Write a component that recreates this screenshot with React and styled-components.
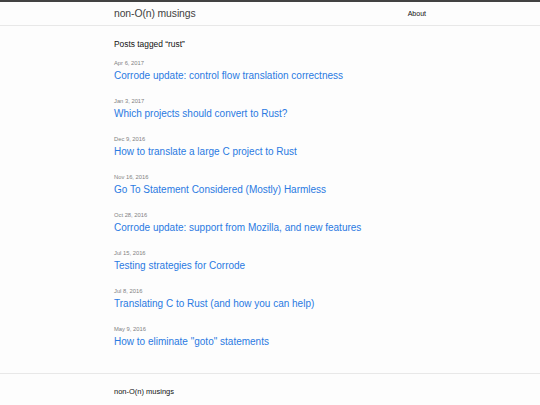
import React from 'react';
import styled, { createGlobalStyle } from 'styled-components';

const GlobalStyle = createGlobalStyle`
  html, body {
    margin: 0;
    padding: 0;
    background: #fdfdfd;
  }
  body {
    font-family: "Liberation Sans", Arial, sans-serif;
    color: #111;
  }
`;

const Header = styled.header`
  border-top: 2px solid #424242;
  border-bottom: 1px solid #e8e8e8;
`;

const Wrapper = styled.div`
  max-width: 312px;
  margin: 0 auto;
`;

const HeaderInner = styled(Wrapper)`
  display: flex;
  align-items: center;
  justify-content: space-between;
  height: 23px;
`;

const SiteTitle = styled.a`
  font-size: 10.4px;
  letter-spacing: -0.1px;
  color: #424242;
  text-decoration: none;
`;

const NavLink = styled.a`
  font-size: 7px;
  color: #111;
  text-decoration: none;
`;

const Main = styled.main`
  padding: 12px 0 11px;
`;

const Heading = styled.h1`
  margin: 0 0 8px;
  font-size: 8.4px;
  font-weight: normal;
  line-height: 12px;
`;

const PostList = styled.ul`
  list-style: none;
  margin: 0;
  padding: 0;
`;

const PostItem = styled.li`
  margin-bottom: 12px;
`;

const PostMeta = styled.span`
  display: block;
  font-size: 5.8px;
  line-height: 10px;
  color: #828282;
`;

const PostLink = styled.a`
  display: block;
  font-size: 10px;
  line-height: 16px;
  color: #2a7ae2;
  text-decoration: none;
`;

const Footer = styled.footer`
  border-top: 1px solid #e8e8e8;
  padding: 12px 0 4px;
`;

const FooterTitle = styled.div`
  font-size: 7.5px;
  line-height: 12px;
  color: #111;
`;

const posts = [
  { date: 'Apr 6, 2017', title: 'Corrode update: control flow translation correctness' },
  { date: 'Jan 3, 2017', title: 'Which projects should convert to Rust?' },
  { date: 'Dec 9, 2016', title: 'How to translate a large C project to Rust' },
  { date: 'Nov 16, 2016', title: 'Go To Statement Considered (Mostly) Harmless' },
  { date: 'Oct 28, 2016', title: 'Corrode update: support from Mozilla, and new features' },
  { date: 'Jul 15, 2016', title: 'Testing strategies for Corrode' },
  { date: 'Jul 8, 2016', title: 'Translating C to Rust (and how you can help)' },
  { date: 'May 9, 2016', title: 'How to eliminate "goto" statements' },
];

function App() {
  return (
    <>
      <GlobalStyle />
      <Header>
        <HeaderInner>
          <SiteTitle href="#">non-O(n) musings</SiteTitle>
          <NavLink href="#">About</NavLink>
        </HeaderInner>
      </Header>
      <Main>
        <Wrapper>
          <Heading>Posts tagged “rust”</Heading>
          <PostList>
            {posts.map((post) => (
              <PostItem key={post.title}>
                <PostMeta>{post.date}</PostMeta>
                <PostLink href="#">{post.title}</PostLink>
              </PostItem>
            ))}
          </PostList>
        </Wrapper>
      </Main>
      <Footer>
        <Wrapper>
          <FooterTitle>non-O(n) musings</FooterTitle>
        </Wrapper>
      </Footer>
    </>
  );
}

export default App;
